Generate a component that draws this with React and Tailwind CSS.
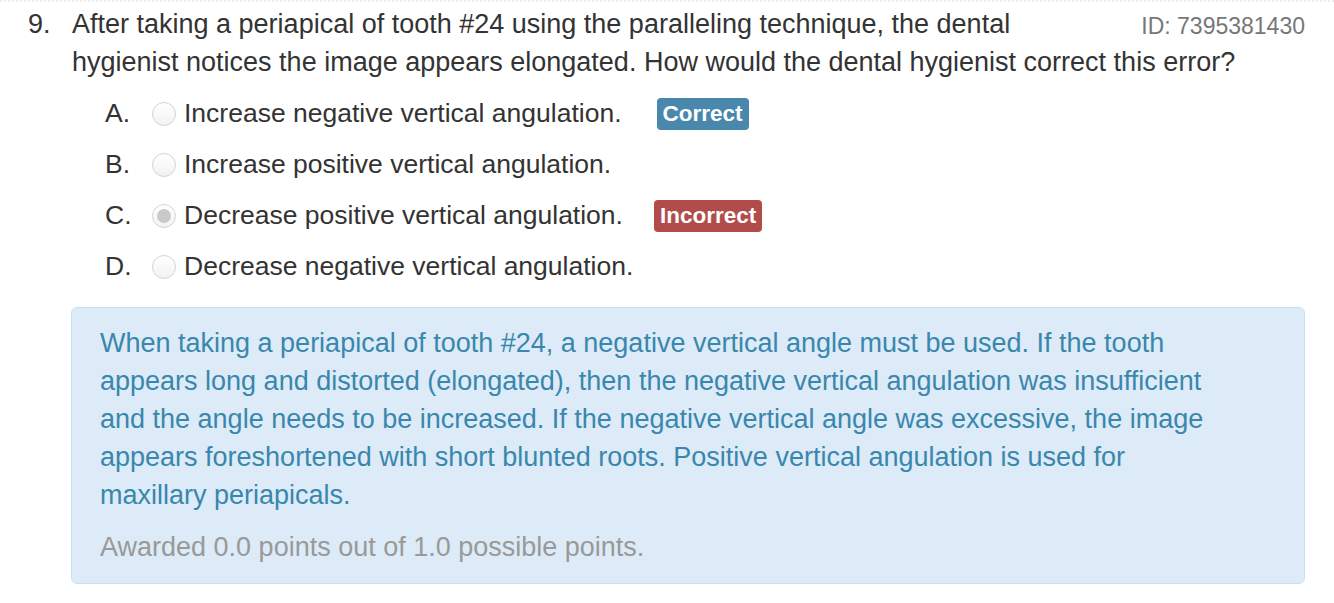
const options = [
  { letter: "A.", text: "Increase negative vertical angulation.", badge: "correct" },
  { letter: "B.", text: "Increase positive vertical angulation." },
  { letter: "C.", text: "Decrease positive vertical angulation.", badge: "incorrect", checked: true },
  { letter: "D.", text: "Decrease negative vertical angulation." },
];

const explanation = [
  "When taking a periapical of tooth #24, a negative vertical angle must be used. If the tooth",
  "appears long and distorted (elongated), then the negative vertical angulation was insufficient",
  "and the angle needs to be increased. If the negative vertical angle was excessive, the image",
  "appears foreshortened with short blunted roots. Positive vertical angulation is used for",
  "maxillary periapicals.",
];

function Radio({ checked }) {
  return (
    <span className="flex h-[24px] w-[24px] shrink-0 items-center justify-center rounded-full border border-[#d4d4d4] bg-gradient-to-b from-white to-[#f2f2f2]">
      {checked ? <span className="h-[14px] w-[14px] rounded-full bg-[#c9c9c9]" /> : null}
    </span>
  );
}

function Badge({ kind }) {
  if (kind === "correct") {
    return (
      <span className="ml-[35px] inline-flex h-[32px] items-center rounded-[4px] bg-[#4a87ad] px-[6px] text-[22.5px] font-bold text-white">
        Correct
      </span>
    );
  }
  return (
    <span className="ml-[31px] inline-flex h-[32px] items-center rounded-[4px] bg-[#b24c4a] px-[6px] text-[22.5px] font-bold text-white">
      Incorrect
    </span>
  );
}

export default function App() {
  return (
    <div className="min-h-screen bg-white font-['Liberation_Sans',Arial,sans-serif] text-[#333]">
      <div className="border-t-2 border-dotted border-[#ececec] pt-[3px]">
        <div className="flex pl-[28px] pr-[29px]">
          <span className="w-[44px] shrink-0 text-[27px] leading-[38px]">9.</span>
          <p className="min-w-0 flex-1 whitespace-nowrap text-[27px] leading-[38px]">
            After taking a periapical of tooth #24 using the paralleling technique, the dental
            <br />
            hygienist notices the image appears elongated. How would the dental hygienist correct this error?
          </p>
          <span className="shrink-0 pt-[2px] text-[23px] leading-[38px] text-[#777]">ID: 7395381430</span>
        </div>

        <ul className="mt-[7px] pl-[105px]">
          {options.map((o) => (
            <li key={o.letter} className="flex h-[51px] items-center text-[26.5px]">
              <span className="w-[47px] shrink-0">{o.letter}</span>
              <Radio checked={o.checked} />
              <span className="ml-[8px]">{o.text}</span>
              {o.badge ? <Badge kind={o.badge} /> : null}
            </li>
          ))}
        </ul>

        <div className="ml-[71px] mr-[29px] mt-[15px] rounded-[6px] border border-[#c5e4f1] bg-[#dcebf7] pb-[17px] pl-[28px] pr-[28px] pt-[16px]">
          <p className="text-[27px] leading-[38px] text-[#3a87ad]">
            {explanation.map((line, i) => (
              <span key={i} className="block whitespace-nowrap">
                {line}
              </span>
            ))}
          </p>
          <p className="mt-[14px] text-[27px] leading-[38px] text-[#999]">
            Awarded 0.0 points out of 1.0 possible points.
          </p>
        </div>
      </div>
    </div>
  );
}
